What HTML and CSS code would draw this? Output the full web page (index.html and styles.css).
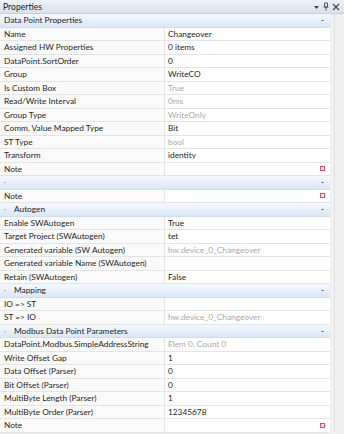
FILE: index.html
```html
<!DOCTYPE html>
<html lang="en">
<head>
  <meta charset="UTF-8">
  <title>Properties</title>
  <link rel="stylesheet" href="styles.css">
</head>
<body>
<div class="panel">
  <div class="panel-title">
    <span>Properties</span>
    <span class="title-icons">
      <svg width="7" height="6" viewBox="0 0 7 6"><path d="M1 2h5l-2.5 3z" fill="#444"/></svg>
      <svg width="6" height="9" viewBox="0 0 6 9"><path d="M1.5 1h3v4h-3z M0.5 5h5 M3 5v3.5" fill="none" stroke="#555" stroke-width="1"/></svg>
      <svg width="8" height="8" viewBox="0 0 8 8"><path d="M1 1l6 6M7 1l-6 6" stroke="#444" stroke-width="1.2"/></svg>
    </span>
  </div>

  <div class="body">
    <div class="grid">
      <div class="section"><span class="sec-name plain">Data Point Properties</span><span class="collapse">-</span></div>
      <div class="row"><div class="key">Name</div><div class="val">Changeover</div></div>
      <div class="row"><div class="key">Assigned HW Properties</div><div class="val">0 items</div></div>
      <div class="row"><div class="key">DataPoint.SortOrder</div><div class="val">0</div></div>
      <div class="row"><div class="key">Group</div><div class="val">WriteCO</div></div>
      <div class="row"><div class="key">Is Custom Box</div><div class="val off">True</div></div>
      <div class="row"><div class="key">Read/Write Interval</div><div class="val off">0ms</div></div>
      <div class="row"><div class="key">Group Type</div><div class="val off">WriteOnly</div></div>
      <div class="row"><div class="key">Comm. Value Mapped Type</div><div class="val">Bit</div></div>
      <div class="row"><div class="key">ST Type</div><div class="val off">bool</div></div>
      <div class="row"><div class="key">Transform</div><div class="val">identity</div></div>
      <div class="row"><div class="key">Note</div><div class="val"><span class="note-ico"></span></div></div>

      <div class="section"><span class="sec-name"><span class="arrow">&middot;</span></span><span class="collapse">-</span></div>
      <div class="row"><div class="key">Note</div><div class="val"><span class="note-ico"></span></div></div>

      <div class="section"><span class="sec-name"><span class="arrow">&middot;</span>Autogen</span><span class="collapse">-</span></div>
      <div class="row"><div class="key">Enable SWAutogen</div><div class="val">True</div></div>
      <div class="row"><div class="key">Target Project (SWAutogen)</div><div class="val">tet</div></div>
      <div class="row"><div class="key">Generated variable (SW Autogen)</div><div class="val off">hw.device_0_Changeover</div></div>
      <div class="row"><div class="key">Generated variable Name (SWAutogen)</div><div class="val"></div></div>
      <div class="row"><div class="key">Retain (SWAutogen)</div><div class="val">False</div></div>

      <div class="section"><span class="sec-name"><span class="arrow">&middot;</span>Mapping</span><span class="collapse">-</span></div>
      <div class="row"><div class="key">IO =&gt; ST</div><div class="val"></div></div>
      <div class="row"><div class="key">ST =&gt; IO</div><div class="val off">hw.device_0_Changeover</div></div>

      <div class="section"><span class="sec-name"><span class="arrow">&middot;</span>Modbus Data Point Parameters</span><span class="collapse">-</span></div>
      <div class="row"><div class="key">DataPoint.Modbus.SimpleAddressString</div><div class="val off">Elem 0, Count 0</div></div>
      <div class="row"><div class="key">Write Offset Gap</div><div class="val">1</div></div>
      <div class="row"><div class="key">Data Offset (Parser)</div><div class="val">0</div></div>
      <div class="row"><div class="key">Bit Offset (Parser)</div><div class="val">0</div></div>
      <div class="row"><div class="key">MultiByte Length (Parser)</div><div class="val">1</div></div>
      <div class="row"><div class="key">MultiByte Order (Parser)</div><div class="val">12345678</div></div>
      <div class="row"><div class="key">Note</div><div class="val"><span class="note-ico"></span></div></div>
    </div>
    <div class="side"></div>
  </div>
</div>
</body>
</html>
```

FILE: styles.css
```css
body {
  margin: 0;
  background-color: #f0f0f0;
  font-family: Lato, "Open Sans", sans-serif;
  font-size: 8.3px;
  color: #1e1e1e;
}

.panel {
  width: 344px;
  height: 434px;
  overflow: hidden;
  background-color: #f0f0f0;
}

.panel-title {
  height: 14px;
  box-sizing: border-box;
  padding: 0 3px;
  display: flex;
  align-items: center;
  justify-content: space-between;
  background: linear-gradient(#eef2f8, #d9e1ec);
  border-bottom: 1px solid #c6cfdb;
  font-size: 8.6px;
}

.title-icons {
  display: flex;
  align-items: center;
  gap: 3px;
  padding-right: 1px;
}

.body {
  display: flex;
}

.grid {
  width: 330px;
  background-color: #fff;
}

.side {
  flex: 1;
  border-left: 1px solid #e2e2e2;
  margin-left: 4px;
}

.row,
.section {
  height: 13.5px;
  box-sizing: border-box;
  display: flex;
  align-items: center;
}

.row {
  border-bottom: 1px solid #e4e4e4;
}

.key {
  width: 165px;
  box-sizing: border-box;
  padding-left: 4px;
  height: 100%;
  display: flex;
  align-items: center;
  background-color: #fafafa;
  border-right: 1px solid #e4e4e4;
  white-space: nowrap;
}

.val {
  flex: 1;
  padding-left: 3px;
  padding-right: 5px;
  height: 100%;
  display: flex;
  align-items: center;
  justify-content: space-between;
  white-space: nowrap;
}

.val.off {
  color: #a8a8a8;
}

.section {
  background: linear-gradient(#f5f9fe, #d9e7f7);
  border-bottom: 1px solid #d2dced;
  justify-content: space-between;
  padding: 0 6px 0 4px;
}

.sec-name {
  display: flex;
  align-items: center;
}

.arrow {
  width: 10px;
  color: #777;
  font-size: 7px;
}

.collapse {
  color: #444;
  font-weight: bold;
}

.note-ico {
  margin-left: auto;
  width: 3px;
  height: 3px;
  border: 1.5px solid #e24a5f;
  background-color: #ffe8ec;
}
```
